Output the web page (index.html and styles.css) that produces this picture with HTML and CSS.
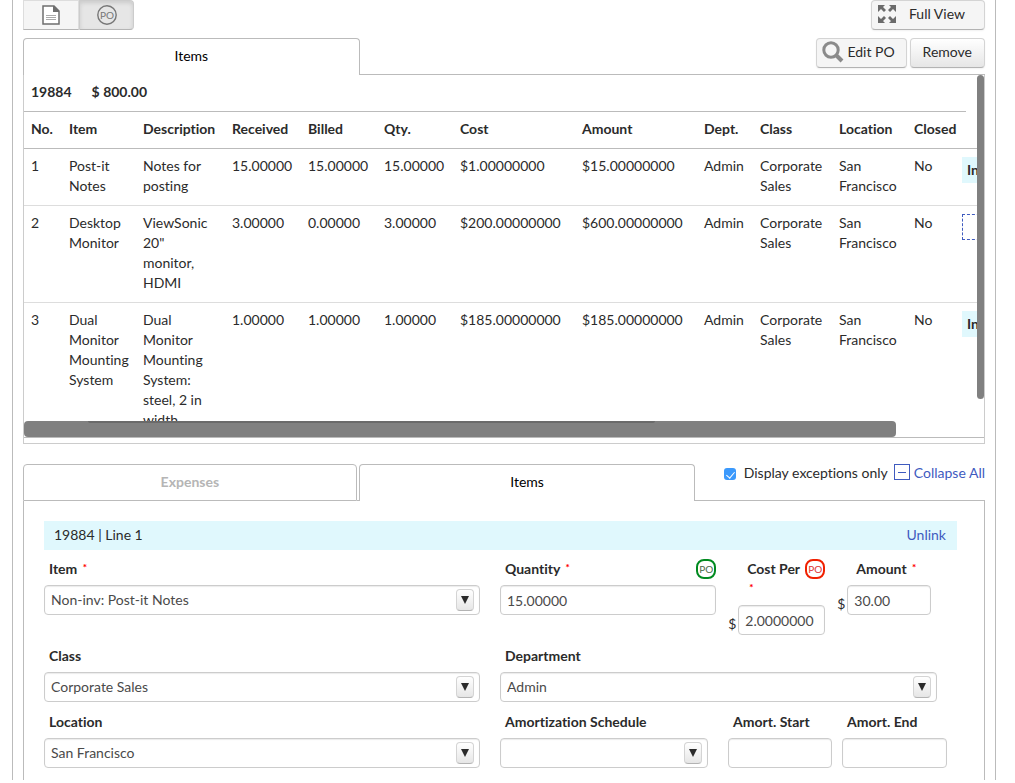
FILE: index.html
```html
<!DOCTYPE html>
<html lang="en">
<head>
    <meta charset="UTF-8">
    <meta name="viewport" content="width=device-width, initial-scale=1.0">
    <title>Purchase Order Items</title>
    <link rel="stylesheet" href="styles.css">
</head>
<body>
    <div class="page">
        <div class="toolbar">
            <div class="view-switch">
                <button type="button" class="switch" aria-label="Document">
                    <svg width="18" height="20" viewBox="0 0 18 20">
                        <path d="M1 1h11l5 5v13H1z" fill="#fff" stroke="#6e6e6e" stroke-width="1.5"/>
                        <path d="M11 1h1l5 5v1h-6z" fill="#6e6e6e"/>
                        <path d="M4 10.500h10M4 12.500h10M4 14.500h10" stroke="#aaa"/>
                    </svg>
                </button>
                <button type="button" class="switch active" aria-label="Purchase order">
                    <svg width="20" height="20" viewBox="0 0 20 20">
                        <circle cx="10" cy="10" r="9.200" fill="none" stroke="#777" stroke-width="1.400"/>
                        <text x="10" y="14" text-anchor="middle" font-size="10" fill="#777">PO</text>
                    </svg>
                </button>
            </div>
            <button type="button" class="btn flat full-view">
                <svg width="18" height="18" viewBox="0 0 18 18" fill="#6b6b6b">
                    <g id="arrow"><path d="M0 0h7L5 2l3 3-2 2-3-3-3 3z"/></g>
                    <use href="#arrow" transform="matrix(-1 0 0 1 18 0)"/>
                    <use href="#arrow" transform="matrix(1 0 0 -1 0 18)"/>
                    <use href="#arrow" transform="matrix(-1 0 0 -1 18 18)"/>
                </svg>
                Full View
            </button>
        </div>

        <div class="tabs">
            <button type="button" class="tab active">Items</button>
            <div class="tab-rest">
                <button type="button" class="btn flat edit">
                    <svg width="22" height="22" viewBox="0 0 22 22" fill="none" stroke="#8a8a8a">
                        <circle cx="9" cy="9" r="7.200" stroke-width="3"/>
                        <path d="M14 14l6 6" stroke-width="4"/>
                    </svg>
                    Edit PO
                </button>
                <button type="button" class="btn">Remove</button>
            </div>
        </div>

        <div class="po-panel">
            <div class="po-scroll">
                <div class="po-title"><span>19884</span><span>$ 800.00</span></div>
                <table class="po-table">
                    <colgroup>
                        <col class="c-no"><col class="c-item"><col class="c-desc">
                        <col class="c-num"><col class="c-num"><col class="c-num">
                        <col class="c-money"><col class="c-money">
                        <col class="c-dept"><col class="c-class"><col class="c-loc"><col class="c-closed"><col class="c-status">
                    </colgroup>
                    <thead>
                        <tr>
                            <th>No.</th><th>Item</th><th>Description</th><th>Received</th><th>Billed</th><th>Qty.</th>
                            <th>Cost</th><th>Amount</th><th>Dept.</th><th>Class</th><th>Location</th><th>Closed</th><th></th>
                        </tr>
                    </thead>
                    <tbody>
                        <tr>
                            <td>1</td><td>Post-it Notes</td><td>Notes for posting</td>
                            <td>15.00000</td><td>15.00000</td><td>15.00000</td>
                            <td>$1.00000000</td><td>$15.00000000</td>
                            <td>Admin</td><td>Corporate Sales</td><td>San Francisco</td><td>No</td>
                            <td><div class="status">In</div></td>
                        </tr>
                        <tr>
                            <td>2</td><td>Desktop Monitor</td><td>ViewSonic 20" monitor, HDMI</td>
                            <td>3.00000</td><td>0.00000</td><td>3.00000</td>
                            <td>$200.00000000</td><td>$600.00000000</td>
                            <td>Admin</td><td>Corporate Sales</td><td>San Francisco</td><td>No</td>
                            <td><div class="status drop"></div></td>
                        </tr>
                        <tr>
                            <td>3</td><td>Dual Monitor Mounting System</td><td>Dual Monitor Mounting System: steel, 2 in width</td>
                            <td>1.00000</td><td>1.00000</td><td>1.00000</td>
                            <td>$185.00000000</td><td>$185.00000000</td>
                            <td>Admin</td><td>Corporate Sales</td><td>San Francisco</td><td>No</td>
                            <td><div class="status">In</div></td>
                        </tr>
                    </tbody>
                </table>
                <div class="thumb-v"></div>
                <div class="thumb-h"></div>
            </div>
        </div>

        <div class="tabs lower">
            <button type="button" class="tab">Expenses</button>
            <span class="tab-gap"></span>
            <button type="button" class="tab active">Items</button>
            <div class="tab-rest options">
                <input type="checkbox" id="exceptions" checked>
                <label for="exceptions">Display exceptions only</label>
                <a href="#" class="collapse"><span class="minus"></span>Collapse All</a>
            </div>
        </div>

        <form class="line-panel">
            <div class="line-title">
                <span>19884 | Line 1</span>
                <a href="#">Unlink</a>
            </div>

            <div class="row amounts-row">
                <div class="field">
                    <label for="item">Item <span class="req">*</span></label>
                    <div class="select">
                        <select id="item"><option>Non-inv: Post-it Notes</option></select>
                        <span class="caret"></span>
                    </div>
                </div>
                <div class="amounts">
                    <div class="field">
                        <label for="quantity" class="split">
                            <span>Quantity <span class="req">*</span></span>
                            <span class="po">PO</span>
                        </label>
                        <input type="text" id="quantity" value="15.00000">
                    </div>
                    <div class="field money">
                        <label for="cost">Cost Per <span class="po red">PO</span><br><span class="req">*</span></label>
                        <div class="currency">$<input type="text" id="cost" value="2.0000000"></div>
                    </div>
                    <div class="field money">
                        <label for="amount">Amount <span class="req">*</span></label>
                        <div class="currency">$<input type="text" id="amount" value="30.00"></div>
                    </div>
                </div>
            </div>

            <div class="row">
                <div class="field">
                    <label for="class">Class</label>
                    <div class="select">
                        <select id="class"><option>Corporate Sales</option></select>
                        <span class="caret"></span>
                    </div>
                </div>
                <div class="field department">
                    <label for="department">Department</label>
                    <div class="select">
                        <select id="department"><option>Admin</option></select>
                        <span class="caret"></span>
                    </div>
                </div>
            </div>

            <div class="row">
                <div class="field">
                    <label for="location">Location</label>
                    <div class="select">
                        <select id="location"><option>San Francisco</option></select>
                        <span class="caret"></span>
                    </div>
                </div>
                <div class="amort">
                    <div class="field schedule">
                        <label for="schedule">Amortization Schedule</label>
                        <div class="select">
                            <select id="schedule"><option></option></select>
                            <span class="caret"></span>
                        </div>
                    </div>
                    <div class="field">
                        <label for="start">Amort. Start</label>
                        <input type="text" id="start">
                    </div>
                    <div class="field">
                        <label for="end">Amort. End</label>
                        <input type="text" id="end">
                    </div>
                </div>
            </div>
        </form>
    </div>
</body>
</html>
```
FILE: styles.css
```css
* {
    box-sizing: border-box;
}
body {
    margin: 0;
    background: #fff;
    color: #2b2b2b;
    font-family: Lato, "Liberation Sans", sans-serif;
    font-size: 14px;
    font-variant-ligatures: none;
    line-height: 20px;
}
button, input, select {
    font: inherit;
    color: inherit;
    margin: 0;
}
a {
    color: #3f5bbf;
    text-decoration: none;
}
svg {
    display: block;
}
.page {
    margin: 0 19px 0 12px;
    padding: 0 10px;
    border: solid #bbb;
    border-width: 0 1px;
}

/* toolbar */
.toolbar {
    display: flex;
    justify-content: space-between;
    margin-bottom: 8px;
}
.view-switch {
    display: flex;
}
.switch {
    display: flex;
    align-items: center;
    justify-content: center;
    width: 56px;
    height: 30px;
    padding: 0;
    border: 1px solid #ddd;
    border-bottom-color: #b5b5b5;
    background: #f5f5f5;
    cursor: pointer;
}
.switch.active {
    width: 55px;
    border-color: #ccc;
    border-bottom-color: #b5b5b5;
    border-radius: 0 4px 4px 0;
    background: #e6e6e6;
    box-shadow: inset 0 2px 4px rgba(0, 0, 0, 0.12);
}
.btn {
    display: flex;
    align-items: center;
    height: 30px;
    padding: 0 12px 2px;
    border: 1px solid #d4d4d4;
    border-bottom-color: #b3b3b3;
    border-radius: 4px;
    background: linear-gradient(#fff, #e6e6e6);
    box-shadow: 0 1px 2px rgba(0, 0, 0, 0.06);
    cursor: pointer;
}
.btn.flat {
    background: #f5f5f5;
}
.full-view {
    gap: 13px;
    padding: 0 19px 2px 6px;
}
.btn.edit {
    gap: 3px;
    padding: 0 11px 2px 5px;
}

/* tabs */
.tabs {
    display: flex;
}
.tabs.lower {
    margin-top: 20px;
}
.tab {
    width: 35%;
    height: 37px;
    padding: 0 0 2px;
    border: 1px solid #bbb;
    border-radius: 4px 4px 0 0;
    background: #fff;
    color: #b5b5b5;
    font-weight: bold;
    cursor: pointer;
}
.tab.active {
    border-bottom: 0;
    color: #000;
    font-weight: normal;
}
.tab-gap {
    width: 2px;
    border-bottom: 1px solid #bbb;
}
.tabs.lower .tab:first-child {
    width: calc(35% - 3px);
}
.tab-rest {
    display: flex;
    flex: 1;
    align-items: flex-start;
    justify-content: flex-end;
    gap: 3px;
    border-bottom: 1px solid #bbb;
    white-space: nowrap;
}

/* purchase order table */
.po-panel {
    padding-bottom: 5px;
    border: 1px solid #ccc;
    border-top: 0;
}
.po-scroll {
    position: relative;
    height: 363px;
    overflow: hidden;
    border-bottom: 1px solid #bbb;
}
.po-title {
    display: flex;
    gap: 20px;
    margin-right: 18px;
    padding: 7px 7px 9px;
    border-bottom: 1px solid #bbb;
    font-weight: bold;
}
.po-table {
    width: 1050px;
    table-layout: fixed;
    border-collapse: separate;
    border-spacing: 0;
}
.po-table th,
.po-table td {
    padding: 7px 0 9px 8px;
    border-bottom: 1px solid #ddd;
    text-align: left;
    vertical-align: top;
}
.po-table th {
    border-bottom-color: #bbb;
}
.po-table th:first-child,
.po-table td:first-child {
    padding-left: 7px;
}
.po-table td:nth-child(2),
.po-table td:nth-child(3) {
    padding-right: 12px;
}
.po-table td:last-child {
    padding-top: 8px;
}
.c-no { width: 37px; }
.c-item { width: 74px; }
.c-desc { width: 89px; }
.c-num { width: 76px; }
.c-money { width: 122px; }
.c-dept { width: 56px; }
.c-class { width: 79px; }
.c-loc { width: 75px; }
.c-closed { width: 48px; }
.status {
    height: 26px;
    padding: 3px 5px;
    background: #e0f8fd;
    font-weight: bold;
}
.status.drop {
    border: 1px dashed #3f5bbf;
    background: none;
}
.thumb-v {
    position: absolute;
    top: 0;
    right: 0;
    width: 7px;
    height: 324px;
    border-radius: 4px;
    background: #808080;
}
.thumb-h {
    position: absolute;
    left: 0;
    right: 88px;
    bottom: 0;
    height: 16px;
    border-radius: 4px;
    background: #808080;
}
.thumb-h::before {
    content: "";
    position: absolute;
    top: 0;
    left: 64px;
    width: 65%;
    height: 2px;
    border-radius: 0 0 2px 2px;
    background: #6a6a6a;
}

/* exceptions / collapse */
.options input {
    position: relative;
    width: 12px;
    height: 12px;
    margin: 4px 5px 0 0;
    appearance: none;
    border-radius: 3px;
    background: #3b99fc;
}
.options input:checked::after {
    content: "";
    position: absolute;
    top: 2px;
    left: 4px;
    width: 4px;
    height: 7px;
    border: solid #fff;
    border-width: 0 1px 1px 0;
    transform: rotate(40deg);
}
.options label,
.options a {
    margin-top: -1px;
}
.options label {
    margin-right: 3px;
}
.collapse {
    display: flex;
    gap: 4px;
}
.minus {
    display: flex;
    align-items: center;
    justify-content: center;
    width: 16px;
    height: 16px;
    margin-top: 1px;
    border: 1px solid #3f5bbf;
}
.minus::before {
    content: "";
    width: 8px;
    height: 1px;
    background: #3f5bbf;
}

/* line form */
.line-panel {
    padding: 20px 27px 12px 20px;
    border: solid #bbb;
    border-width: 0 1px;
}
.line-title {
    display: flex;
    align-items: center;
    justify-content: space-between;
    height: 29px;
    margin-bottom: 9px;
    padding: 0 11px 1px 10px;
    background: #e0f8fd;
}
.row {
    display: grid;
    grid-template-columns: 436fr 457fr;
    gap: 20px;
    margin-bottom: 10px;
}
.amounts-row {
    margin-bottom: 11px;
}
.row:last-child {
    margin-bottom: 0;
}
.field label {
    display: block;
    margin-bottom: 6px;
    padding-left: 5px;
    font-weight: bold;
    white-space: nowrap;
}
.field input,
.field select {
    display: block;
    width: 100%;
    height: 30px;
    padding: 0 6px;
    appearance: none;
    border: 1px solid #ccc;
    border-radius: 4px;
    background: #fff;
    box-shadow: inset 0 1px 1px rgba(0, 0, 0, 0.08);
    color: #4a4a4a;
}
.field label.split {
    display: flex;
    justify-content: space-between;
}
.req {
    position: relative;
    top: -3px;
    margin-left: 2px;
    color: #f00;
    font-size: 10px;
    font-weight: 900;
    line-height: 10px;
}
.po {
    display: inline-flex;
    align-items: center;
    justify-content: center;
    width: 20px;
    height: 20px;
    border: 2px solid #008a20;
    border-radius: 8px;
    color: #4a6b4a;
    font-size: 10px;
    font-weight: normal;
    line-height: 16px;
    vertical-align: top;
}
.po.red {
    margin-left: 2px;
    border-color: #f02000;
    color: #d33;
}
.select {
    position: relative;
}
.caret {
    position: absolute;
    top: 4px;
    right: 6px;
    width: 18px;
    height: 22px;
    border: 1px solid #d4d4d4;
    border-bottom-color: #b3b3b3;
    border-radius: 4px;
    background: linear-gradient(#fff, #e6e6e6);
    pointer-events: none;
}
.caret::before {
    content: "";
    position: absolute;
    top: 6px;
    left: 4px;
    border: solid transparent;
    border-width: 8px 4px 0;
    border-top-color: #2b2b2b;
}
.amounts {
    display: grid;
    grid-template-columns: 219fr 94fr 95fr;
    gap: 12px;
    padding-right: 26px;
}
.money label {
    padding-left: 19px;
}
.currency {
    display: flex;
    align-items: flex-end;
    gap: 2px;
    line-height: 22px;
}
.department {
    padding-right: 20px;
}
.amort {
    display: grid;
    grid-template-columns: 218fr 104fr 105fr;
    gap: 10px;
    padding-right: 10px;
}
.schedule {
    padding-right: 10px;
}
```
